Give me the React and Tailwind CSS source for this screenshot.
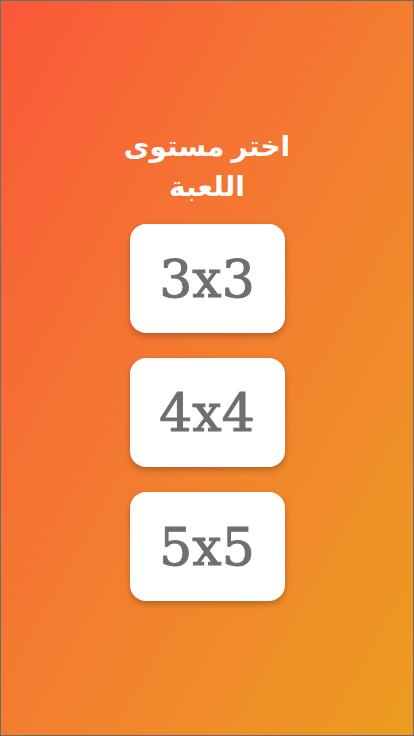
const levels = ["3x3", "4x4", "5x5"];

export default function App() {
  return (
    <div className="w-[414px] h-[736px] border border-[#6b6b6b] bg-gradient-to-br from-[#f95739] to-[#eb9c1f] flex flex-col items-center justify-center">
      <h1
        dir="rtl"
        className="text-white text-[28px] font-bold leading-[40px] text-center w-[180px] mb-[19px] mt-[-10px]"
        style={{ fontFamily: '"Noto Sans", "DejaVu Sans", sans-serif' }}
      >
        اختر مستوى اللعبة
      </h1>
      <div className="flex flex-col gap-[25px]">
        {levels.map((lvl) => (
          <button
            key={lvl}
            className="w-[155px] h-[109px] bg-white rounded-[16px] shadow-[0_3px_6px_rgba(0,0,0,0.25)] flex items-center justify-center text-[#6f6f6f] text-[52px] [-webkit-text-stroke:1px_#6f6f6f]"
            style={{ fontFamily: '"DejaVu Serif", serif' }}
          >
            {lvl}
          </button>
        ))}
      </div>
    </div>
  );
}
